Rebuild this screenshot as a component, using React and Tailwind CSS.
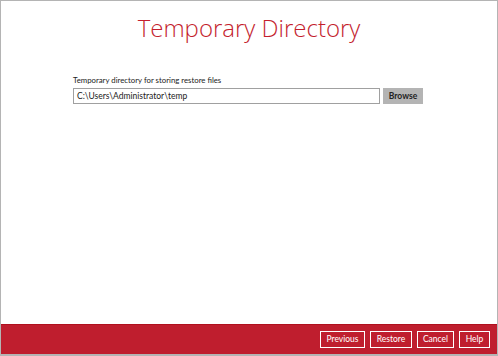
import React from 'react';

const buttons = [
  { label: 'Previous', w: 'w-[45px]' },
  { label: 'Restore', w: 'w-[42px]' },
  { label: 'Cancel', w: 'w-[37px]' },
  { label: 'Help', w: 'w-[31px]' },
];

export default function App() {
  return (
    <div className="w-[498px] h-[356px] flex flex-col bg-white border border-[#b4b4b4] border-b-2 overflow-hidden" style={{ fontFamily: '"Open Sans", "Noto Sans", sans-serif' }}>
      {/* Content */}
      <div className="flex-1 flex flex-col">
        <h1 className="mt-[10px] text-center text-[24px] leading-[34px] font-light text-[#c41e2e]">Temporary Directory</h1>
        <div className="mt-[29px] ml-[72px] mr-[74px]" style={{ fontFamily: 'Lato, "Open Sans", sans-serif' }}>
          <p className="text-[7.8px] leading-[12px] text-[#222] mb-[2px]">Temporary directory for storing restore files</p>
          <div className="flex items-center gap-[3px]">
            <div className="flex-1 h-[16px] border border-[#a0a0a0] px-[3px] flex items-center text-[8.5px] text-[#222]">C:\Users\Administrator\temp</div>
            <button className="w-[40px] h-[16px] bg-[#b4b4b4] text-[8.5px] font-bold text-[#222]">Browse</button>
          </div>
        </div>
      </div>

      {/* Footer */}
      <div className="h-[30px] bg-[#bf1e2e] border-t border-[#b0101e] flex items-center justify-end gap-[5px] pr-[7px]" style={{ fontFamily: 'Lato, "Open Sans", sans-serif' }}>
        {buttons.map((b) => (
          <button key={b.label} className={`${b.w} h-[17px] border border-white text-white text-[8.5px] bg-[#bf1e2e]`}>{b.label}</button>
        ))}
      </div>
    </div>
  );
}
